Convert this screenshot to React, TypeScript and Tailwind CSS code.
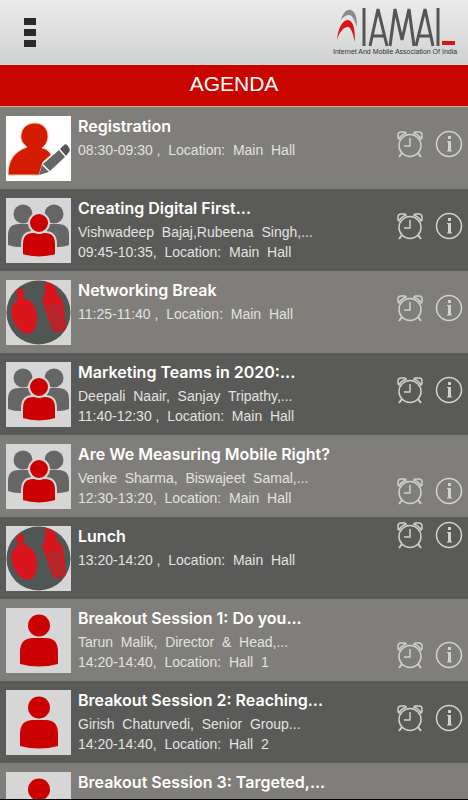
type Kind = 'register' | 'group' | 'food' | 'person'
type Align = 'top' | 'middle' | 'bottom'

type Session = {
  title: string
  speakers?: string
  time: string
  kind: Kind
  align: Align
}

const sessions: Session[] = [
  { title: 'Registration', time: '08:30-09:30 ,  Location:  Main  Hall', kind: 'register', align: 'middle' },
  { title: 'Creating Digital First...', speakers: 'Vishwadeep  Bajaj,Rubeena  Singh,...', time: '09:45-10:35,  Location:  Main  Hall', kind: 'group', align: 'middle' },
  { title: 'Networking Break', time: '11:25-11:40 ,  Location:  Main  Hall', kind: 'food', align: 'middle' },
  { title: 'Marketing Teams in 2020:...', speakers: 'Deepali  Naair,  Sanjay  Tripathy,...', time: '11:40-12:30 ,  Location:  Main  Hall', kind: 'group', align: 'middle' },
  { title: 'Are We Measuring Mobile Right?', speakers: 'Venke  Sharma,  Biswajeet  Samal,...', time: '12:30-13:20,  Location:  Main  Hall', kind: 'group', align: 'bottom' },
  { title: 'Lunch', time: '13:20-14:20 ,  Location:  Main  Hall', kind: 'food', align: 'top' },
  { title: 'Breakout Session 1: Do you...', speakers: 'Tarun  Malik,  Director  &  Head,...', time: '14:20-14:40,  Location:  Hall  1', kind: 'person', align: 'bottom' },
  { title: 'Breakout Session 2: Reaching...', speakers: 'Girish  Chaturvedi,  Senior  Group...', time: '14:20-14:40,  Location:  Hall  2', kind: 'person', align: 'middle' },
  { title: 'Breakout Session 3: Targeted,...', time: '', kind: 'person', align: 'bottom' },
]

const alignClass: Record<Align, string> = {
  top: 'items-start',
  middle: 'items-center',
  bottom: 'items-end',
}

function Thumb({ kind }: { kind: Kind }) {
  if (kind === 'register') {
    return (
      <svg className="size-[65px] shrink-0 bg-white" viewBox="0 0 65 65" aria-hidden="true">
        <path d="M2 59C2 44 8 36 21 31C14 26 14 20 16 15C18 10 23 7 29 7C36 7 42 12 42 20C42 25 40 29 36 32C41 33 44 36 45 39L37 46L33 59Z" fill="#d41c00" stroke="#f6c9a8" strokeWidth="1" />
        <path d="M33 59L36 49L43 56Z" fill="#666" />
        <path d="M37 48L53 34L59 41L44 55Z" fill="#666" />
        <path d="M54 33L58 29Q60 27 62 30Q65 34 63 36L60 40Z" fill="#555" />
      </svg>
    )
  }
  if (kind === 'group') {
    return (
      <svg className="size-[65px] shrink-0 bg-[#d6d6d6]" viewBox="0 0 65 65" aria-hidden="true">
        <g fill="#666">
          <circle cx="17" cy="16" r="9.500" />
          <circle cx="48" cy="16" r="9.500" />
          <path d="M2 47V37Q2 26 13 26H25V49Q10 50 2 47Z" />
          <path d="M63 47V37Q63 26 52 26H40V49Q55 50 63 47Z" />
        </g>
        <g fill="#cc0202" stroke="#d6d6d6" strokeWidth="2">
          <path d="M16 57V46Q16 34 27 34H39Q50 34 50 46V57Q33 62 16 57Z" />
          <circle cx="33" cy="25" r="10" />
        </g>
      </svg>
    )
  }
  if (kind === 'food') {
    return (
      <svg className="size-[65px] shrink-0 bg-[#d6d6d6]" viewBox="0 0 65 65" aria-hidden="true">
        <circle cx="32.500" cy="32.500" r="32" fill="#4f5654" />
        <g fill="#d9141c">
          <path d="M10 11L15 7Q19 12 17 17Q19 19 22 20Q31 25 31 38Q31 52 22 54Q11 52 6 37Q3 26 10 21Q13 17 10 11Z" />
          <path d="M38 3Q46 2 50 8L51 15Q56 17 57 24L60 49L53 53L47 51L40 31L36 19Q41 13 38 3Z" />
        </g>
        <path d="M43 26L50 52M47 24L54 53M51 24L57 50" stroke="#4f5654" strokeWidth="1" fill="none" />
      </svg>
    )
  }
  return (
    <svg className="size-[65px] shrink-0 bg-[#d6d6d6]" viewBox="0 0 65 65" aria-hidden="true">
      <g fill="#cc0202">
        <circle cx="33" cy="17.500" r="11" />
        <path d="M14 56V44Q14 30 27 30H40Q52 30 52 44V56Q33 61 14 56Z" />
      </g>
    </svg>
  )
}

function AlarmIcon() {
  return (
    <svg className="size-7" viewBox="0 0 28 28" fill="none" stroke="#cfcfcc" strokeWidth="1.500" aria-hidden="true">
      <circle cx="14" cy="15.500" r="11" />
      <path d="M14 8V16H8" />
      <path d="M2 8V5Q2 2 5 2H9L10 3Q5 5 3 9ZM26 8V5Q26 2 23 2H19L18 3Q23 5 25 9Z" />
      <path d="M6 23L3 27M22 23L25 27" strokeWidth="2" />
    </svg>
  )
}

function InfoIcon() {
  return (
    <svg className="size-7" viewBox="0 0 28 28" fill="none" stroke="#d2d2cf" aria-hidden="true">
      <circle cx="14" cy="14" r="12.500" strokeWidth="1.500" />
      <path d="M14.500 6V9" strokeWidth="3" />
      <path d="M14.500 11V21" strokeWidth="3" />
      <path d="M12 11.500H15M12 21H17" strokeWidth="1" />
    </svg>
  )
}

function Logo() {
  return (
    <div className="flex w-[124px] flex-col" role="img" aria-label="IAMAI">
      <svg className="h-10 w-full" viewBox="-2 0 124 40" fill="none" aria-hidden="true">
        <path d="M6 13C8 5 12 2 16 3C21 5 22 12 22 20C19 12 17 8 14 8C11 8 8 10 6 13Z" fill="#8c8c8c" />
        <path d="M2 33C3 20 8 13 13 13C19 14 20 23 20 35C18 27 16 20 13 20C8 20 4 26 2 33Z" fill="#d8151b" />
        <g stroke="#555" strokeWidth="3" strokeLinejoin="bevel">
          <path d="M29 1V39M35 39L43 2L52 39M38 29H49" />
          <path d="M55 39L60 2L67 33L74 2L79 39" />
          <path d="M81 39L90 2L98 39M84 29H95M103 1V39" />
        </g>
        <path d="M107 36H120" stroke="#d8151b" strokeWidth="4" />
      </svg>
      <span className="text-[7px] leading-[10px] whitespace-nowrap text-[#333]">Internet And Mobile Association Of India</span>
    </div>
  )
}

function SessionRow({ session }: { session: Session }) {
  return (
    <li className="flex h-[82px] shrink-0 pr-[5px] pl-[6px] odd:bg-[#7f7e7a] even:bg-[#5a5a58]">
      <div className="pt-[9px]">
        <Thumb kind={session.kind} />
      </div>
      <div className="min-w-0 flex-1 pt-[7px] pl-[7px] text-white">
        <h2 className="truncate font-[Inter,sans-serif] text-base leading-[24px] font-semibold">{session.title}</h2>
        <div className="pt-[2px] text-[14px] leading-[20px] whitespace-pre text-[#e2e2e0]">
          {session.speakers && <p>{session.speakers}</p>}
          <p>{session.time}</p>
        </div>
      </div>
      <div className={`flex gap-[11px] pt-1 pb-3 ${alignClass[session.align]}`}>
        <button type="button" aria-label={`Set reminder for ${session.title}`}>
          <AlarmIcon />
        </button>
        <button type="button" aria-label={`Details of ${session.title}`}>
          <InfoIcon />
        </button>
      </div>
    </li>
  )
}

export default function App() {
  return (
    <div className="flex h-screen flex-col overflow-hidden border-b border-black bg-[#5a5a58] font-['Liberation_Sans',Arial,sans-serif]">
      <header className="flex h-16 shrink-0 items-center justify-between bg-linear-to-b from-[#ececec] to-[#d0d2d1] pr-[11px] pl-6">
        <button type="button" aria-label="Menu" className="flex flex-col gap-1">
          <span className="h-[7px] w-3 bg-[#2b2b2b]" />
          <span className="h-[7px] w-3 bg-[#2b2b2b]" />
          <span className="h-[7px] w-3 bg-[#2b2b2b]" />
        </button>
        <Logo />
      </header>
      <div className="flex h-[43px] shrink-0 items-center justify-center border-t border-b border-t-[#f0d8d8] border-b-[#e0a090] bg-[#c90500] pb-1">
        <h1 className="text-[21px] leading-[24px] text-white">AGENDA</h1>
      </div>
      <ul className="flex min-h-0 flex-1 flex-col overflow-y-auto [scrollbar-width:none]">
        {sessions.map((s) => (
          <SessionRow key={s.title} session={s} />
        ))}
      </ul>
    </div>
  )
}
